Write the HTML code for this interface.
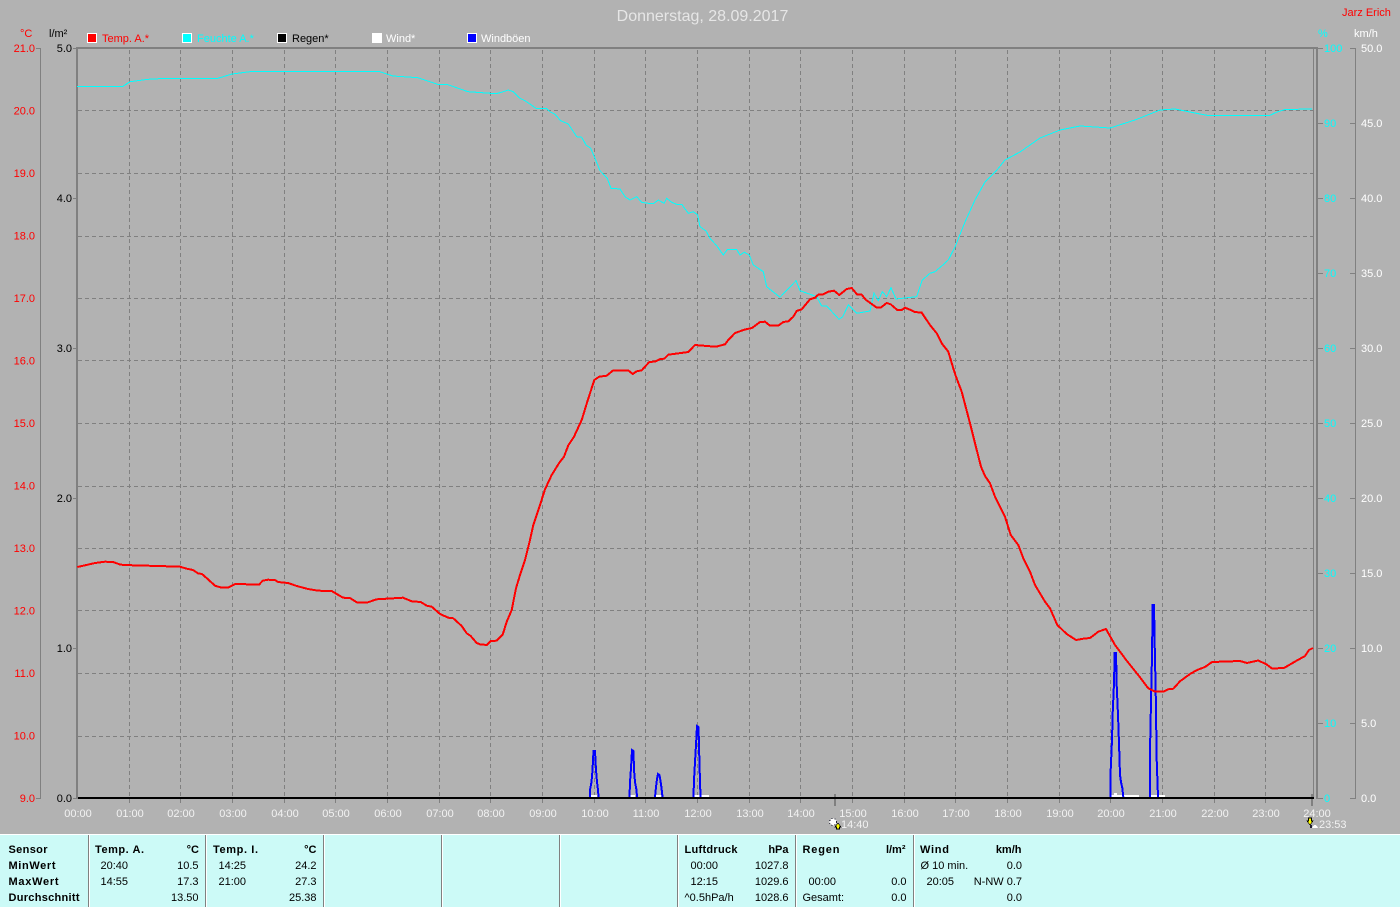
<!DOCTYPE html>
<html><head><meta charset="utf-8"><title>Donnerstag, 28.09.2017</title>
<style>html,body{margin:0;padding:0;background:#b2b2b2;width:1400px;height:907px;overflow:hidden}svg{display:block}text{font-family:"Liberation Sans",sans-serif;font-size:11px}</style></head><body>
<svg width="1400" height="907" viewBox="0 0 1400 907" xmlns="http://www.w3.org/2000/svg">
<rect width="1400" height="907" fill="#b2b2b2"/>
<g shape-rendering="crispEdges" fill="none" stroke="#808080">
<path stroke-dasharray="4 3" d="M78 110.5H1316M78 173.5H1316M78 236.5H1316M78 298.5H1316M78 360.5H1316M78 423.5H1316M78 486.5H1316M78 548.5H1316M78 610.5H1316M78 673.5H1316M78 736.5H1316"/>
<path stroke-dasharray="4 3" d="M129.5 50V803M180.5 50V803M232.5 50V803M284.5 50V803M335.5 50V803M387.5 50V803M439.5 50V803M490.5 50V803M542.5 50V803M594.5 50V803M645.5 50V803M697.5 50V803M749.5 50V803M800.5 50V803M852.5 50V803M904.5 50V803M955.5 50V803M1007.5 50V803M1059.5 50V803M1110.5 50V803M1162.5 50V803M1214.5 50V803M1265.5 50V803"/>
<path d="M40.5 48V798M1355.5 48V798M36 48.5H41M36 798.5H41M1350 48.5H1356M1350 123.5H1356M1350 198.5H1356M1350 273.5H1356M1350 348.5H1356M1350 423.5H1356M1350 498.5H1356M1350 573.5H1356M1350 648.5H1356M1350 723.5H1356M1350 798.5H1356M73 48.5H78M73 198.5H78M73 348.5H78M73 498.5H78M73 648.5H78M73 798.5H78M1318 48.5H1323M1318 123.5H1323M1318 198.5H1323M1318 273.5H1323M1318 348.5H1323M1318 423.5H1323M1318 498.5H1323M1318 573.5H1323M1318 648.5H1323M1318 723.5H1323M1318 798.5H1323M1313.5 48V798"/>
<rect x="76" y="48" width="2" height="751" fill="#808080" stroke="none"/>
<rect x="1316" y="48" width="2" height="751" fill="#808080" stroke="none"/>
<rect x="76" y="47" width="1242" height="2" fill="#808080" stroke="none"/>
<rect x="834" y="794" width="2" height="12" fill="#808080" stroke="none"/>
<rect x="1311" y="794" width="2" height="12" fill="#808080" stroke="none"/>
</g>
<g shape-rendering="crispEdges" fill="none">
<path stroke="#0ff" stroke-width="1" d="M77 86.3L123 86.3 130 81.7 148 79.3 166 78.3 218 78.3 232 74 250 71.7 378.6 71.3 393 76 418 77.7 437.5 84.3 448 84.7 468 91.7 496 93.7 500 92.7 508.3 90 513.3 91.7 520 98.3 525 100.7 536.7 108.7 546.7 108.7 550 111.7 555 114.3 560.7 120.7 568.3 124 576.7 136.7 581.7 137.3 586 145 590.7 148.3 595 158.3 600 170.7 607.3 178.3 611 188.3 620 189 625 196.7 630 200 636.7 196.7 641.7 202.3 648.3 203.3 654 203.3 658.3 200 664 203.3 666.7 198.3 671.7 202.3 676.7 204.3 681.7 204.3 688.3 213.3 693.3 211.7 697.7 215 700 226.7 706 231 710 238.3 716.7 245.7 723.3 255 727.3 249.7 736.7 249.7 740 255 744.3 252.3 749.3 255 753.3 265 763.3 271.7 766.7 286.7 780 297.3 796 280.7 800 290.7 816.7 296.7 821.7 306 826.7 306 839 319.3 842.7 316.7 848.3 305 856.7 313.3 870 311 874 293.3 878.3 300.7 882.3 291.7 886.7 296.7 891 287.7 896 299 916.7 296.7 922.3 280 930 273.3 935 271.7 941.7 266 948.3 260 955 247 965 222 975 200 985 182 997 170 1005 160 1020 152 1040 138 1060 130 1080 126 1110 128 1135 120 1160 110 1175 109 1200 114 1207 115.3 1270 115.3 1277 112 1285 109.5 1312 109"/>
<path stroke="#fff" stroke-width="2" d="M591 796H597M630 796H635M656 796H661M694 796H709M1111 796H1139M1151 796H1165M1114 794H1117"/>
<path stroke="#00f" stroke-width="2" d="M590 797L590 790 591.5 782 592.5 770 593.5 751 595 751 596 770 597 782 598 790 598.5 797"/>
<path stroke="#00f" stroke-width="2" d="M629.5 797L630 782 631 768 632 750 633.5 751 634 770 635 782 636.5 790 637 797"/>
<path stroke="#00f" stroke-width="2" d="M655 797L656 787 657 779 658 774 659.5 775 660.5 781 661.5 788 662.5 797"/>
<path stroke="#00f" stroke-width="2" d="M693.5 797L694 780 695 762 696 745 697 726 698.5 727 699 745 699.5 765 700.5 797"/>
<path stroke="#00f" stroke-width="2" d="M1110.7 797L1110.7 770 1112 740 1112.7 713 1114 683 1114.7 653 1116 653 1116.7 685 1118 715 1119 743 1120 775 1121 782 1122.3 788 1123.3 797"/>
<path stroke="#00f" stroke-width="2" d="M1150 797L1150 750 1151 702 1152 655 1152.7 605 1154 605 1154.7 645 1155.7 692 1156.7 760 1158 797"/>
<path stroke="#f00" stroke-width="2" d="M77.3 567L85 565.3 95 563 105 561.7 113 562 120.7 564.7 133 565.3 158 566 180 566.7 186.7 568.7 193 570 198 573.3 202 574 208 579.3 215 585.7 221.7 587.7 228 587.7 235 584 245 584 248 584.7 259 584.7 262.7 580.7 268 579.7 275 580 278 582 288 583 296.7 586 308 589 318 590.7 331.7 591 343 597.7 350 598 356.7 602.3 366.7 602.7 376.7 599.3 386.7 598.7 403 597.7 411.7 601.3 420.7 602 426.7 605.7 431.7 606.7 440 614 448.3 617.7 453.3 618.3 461.7 626 466.7 633.3 470.7 636 476.7 643 480 644.3 486.7 645 490.7 641 496.7 640.7 502.7 634.7 506.7 621.7 511.7 610 516 588.3 520 575 525 560 530 540 533.3 525 540 505 545 489.3 551.7 475 559.3 462.7 564 456.7 568.3 445.3 574 436.7 581.7 420 587.3 401.7 594.3 380 599.3 376.7 606.7 375.7 612.7 370.7 628.7 370.7 632.7 374 636.7 371.3 641.7 370.3 649 362.3 655.7 361.3 660 359 664.3 358.7 668.3 354.7 688.3 352 695 345 706.7 346 716 346.7 725 344.3 728.3 340 735 333 745 329.5 752 328 760 322 765 321.7 770 325.7 778.3 325.7 783.3 322 788.3 321.3 793.3 316.7 796.7 311 801.7 309.3 810 299.3 815 297.7 818.3 294.7 823.3 294.3 828.3 291.7 834 290.7 839.3 295 846.7 289 851.7 288 857.3 294.7 861.7 294.7 866 300 870 302.7 876.7 307.7 880.7 307.7 886.7 303 890.7 304.3 897.3 310 901.7 310 905 307.7 910.7 310 915 312 921.7 312.7 930 325 936.7 333.3 941.7 343.3 948.3 351.7 953.3 368.3 956 376.7 961.7 391.7 970 423.3 975 443.3 981 466.7 985 476 990 483.3 995 496.7 1005 516.7 1010.7 535 1018.3 545 1023.3 558.3 1030 571.7 1035 585 1045 601.7 1050 608.3 1057.3 625 1066.7 634 1076 640 1083.3 638.7 1090 638 1098.3 631.7 1106 629 1115 645 1126.7 660.7 1140 677.3 1148.3 688.3 1155 691.7 1163.3 691.7 1168.3 689.3 1173.3 688.7 1180 681.3 1190 674 1197 670 1205 667 1212 662 1240 661 1247 663 1258 660.5 1266 664 1272 668.5 1284 668 1296 661 1305 656 1309 650 1313 648"/>
<rect x="78" y="797" width="1236" height="2" fill="#000"/>
</g>
<!-- legend -->
<g shape-rendering="crispEdges" stroke="#fff">
<rect x="87.5" y="33.5" width="9" height="9" fill="#f00"/><rect x="182.5" y="33.5" width="9" height="9" fill="#0ff"/><rect x="277.5" y="33.5" width="9" height="9" fill="#000"/><rect x="372.5" y="33.5" width="9" height="9" fill="#fff"/><rect x="467.5" y="33.5" width="9" height="9" fill="#00f"/>
</g>
<text x="102" y="42" fill="#f00">Temp. A.*</text><text x="197" y="42" fill="#0ff">Feuchte A.*</text><text x="292" y="42" fill="#000">Regen*</text><text x="386" y="42" fill="#fff">Wind*</text><text x="481" y="42" fill="#fff">Windböen</text>
<text x="702.5" y="21" text-anchor="middle" fill="#e6e6e6" style="font-size:16px">Donnerstag, 28.09.2017</text>
<text x="1342" y="16" fill="#f00">Jarz Erich</text>
<text x="20" y="37" fill="#f00">°C</text><text x="49" y="37" fill="#000">l/m²</text><text x="1318" y="37" fill="#0ff">%</text><text x="1354" y="37" fill="#fff">km/h</text>
<g fill="#f00" text-anchor="end"><text x="35" y="52">21.0</text><text x="35" y="114.5">20.0</text><text x="35" y="177">19.0</text><text x="35" y="239.5">18.0</text><text x="35" y="302">17.0</text><text x="35" y="364.5">16.0</text><text x="35" y="427">15.0</text><text x="35" y="489.5">14.0</text><text x="35" y="552">13.0</text><text x="35" y="614.5">12.0</text><text x="35" y="677">11.0</text><text x="35" y="739.5">10.0</text><text x="35" y="802">9.0</text></g>
<g fill="#000" text-anchor="end"><text x="72" y="52">5.0</text><text x="72" y="202">4.0</text><text x="72" y="352">3.0</text><text x="72" y="502">2.0</text><text x="72" y="652">1.0</text><text x="72" y="802">0.0</text></g>
<g fill="#0ff"><text x="1324" y="52">100</text><text x="1324" y="127">90</text><text x="1324" y="202">80</text><text x="1324" y="277">70</text><text x="1324" y="352">60</text><text x="1324" y="427">50</text><text x="1324" y="502">40</text><text x="1324" y="577">30</text><text x="1324" y="652">20</text><text x="1324" y="727">10</text><text x="1324" y="802">0</text></g>
<g fill="#fff"><text x="1361" y="52">50.0</text><text x="1361" y="127">45.0</text><text x="1361" y="202">40.0</text><text x="1361" y="277">35.0</text><text x="1361" y="352">30.0</text><text x="1361" y="427">25.0</text><text x="1361" y="502">20.0</text><text x="1361" y="577">15.0</text><text x="1361" y="652">10.0</text><text x="1361" y="727">5.0</text><text x="1361" y="802">0.0</text></g>
<g fill="#f2f2f2" text-anchor="middle"><text x="78" y="817">00:00</text><text x="130" y="817">01:00</text><text x="181" y="817">02:00</text><text x="233" y="817">03:00</text><text x="285" y="817">04:00</text><text x="336" y="817">05:00</text><text x="388" y="817">06:00</text><text x="440" y="817">07:00</text><text x="491" y="817">08:00</text><text x="543" y="817">09:00</text><text x="595" y="817">10:00</text><text x="646" y="817">11:00</text><text x="698" y="817">12:00</text><text x="750" y="817">13:00</text><text x="801" y="817">14:00</text><text x="853" y="817">15:00</text><text x="905" y="817">16:00</text><text x="956" y="817">17:00</text><text x="1008" y="817">18:00</text><text x="1060" y="817">19:00</text><text x="1111" y="817">20:00</text><text x="1163" y="817">21:00</text><text x="1215" y="817">22:00</text><text x="1266" y="817">23:00</text><text x="1317" y="817">24:00</text></g>
<text x="841" y="828" fill="#f2f2f2">14:40</text><text x="1319" y="828" fill="#f2f2f2">23:53</text>
<!-- sun icons -->
<g shape-rendering="crispEdges">
<circle cx="833" cy="822" r="3.5" fill="#fff" stroke="#223" stroke-width="1" stroke-dasharray="1 2"/>
<path d="M838 823L841 827H839.5V829H836.5V827H835Z" fill="#ff0" stroke="#000" stroke-width=".6"/>
<path d="M1310 825L1307 821H1308.5V818H1311.5V821H1313Z" fill="#ff0" stroke="#000" stroke-width=".6"/>
<path d="M1312 828Q1315 822 1318 828Z" fill="#fff"/><rect x="1310" y="825" width="2" height="3" fill="#223"/>
</g>
<!-- panel -->
<g shape-rendering="crispEdges">
<rect x="0" y="834" width="1400" height="1" fill="#fff"/>
<rect x="0" y="835" width="1400" height="72" fill="#ccfaf7"/>
<path fill="none" stroke="#808080" d="M88.5 835V907M205.5 835V907M323.5 835V907M441.5 835V907M559.5 835V907M677.5 835V907M795.5 835V907M913.5 835V907"/>
<path fill="none" stroke="#fff" d="M89.5 835V907M206.5 835V907M324.5 835V907M442.5 835V907M560.5 835V907M678.5 835V907M796.5 835V907M914.5 835V907"/>
</g>
<g fill="#000" font-weight="bold" style="font-weight:bold">
<text x="8.5" y="853" textLength="39">Sensor</text><text x="8.5" y="869" textLength="47">MinWert</text><text x="8.5" y="885" textLength="50">MaxWert</text><text x="8.5" y="901" textLength="71">Durchschnitt</text>
<text x="95" y="853" textLength="49">Temp. A.</text><text x="199" y="853" text-anchor="end">°C</text>
<text x="213" y="853" textLength="45">Temp. I.</text><text x="316.5" y="853" text-anchor="end">°C</text>
<text x="684.5" y="853" textLength="53">Luftdruck</text><text x="788.5" y="853" text-anchor="end">hPa</text>
<text x="802.5" y="853" textLength="37">Regen</text><text x="905.5" y="853" text-anchor="end">l/m²</text>
<text x="920" y="853" textLength="29">Wind</text><text x="1021.5" y="853" text-anchor="end">km/h</text>
</g>
<g fill="#000">
<text x="100.5" y="869">20:40</text><text x="100.5" y="885">14:55</text>
<text x="218.5" y="869">14:25</text><text x="218.5" y="885">21:00</text>
<text x="690.5" y="869">00:00</text><text x="690.5" y="885">12:15</text><text x="684.5" y="901">^0.5hPa/h</text>
<text x="808.5" y="885">00:00</text><text x="802.5" y="901">Gesamt:</text>
<text x="920.5" y="869">Ø 10 min.</text><text x="926.5" y="885">20:05</text>
</g>
<g fill="#000" text-anchor="end">
<text x="198.5" y="869">10.5</text><text x="198.5" y="885">17.3</text><text x="198.5" y="901">13.50</text>
<text x="316.5" y="869">24.2</text><text x="316.5" y="885">27.3</text><text x="316.5" y="901">25.38</text>
<text x="788.5" y="869">1027.8</text><text x="788.5" y="885">1029.6</text><text x="788.5" y="901">1028.6</text>
<text x="906.5" y="885">0.0</text><text x="906.5" y="901">0.0</text>
<text x="1022" y="869">0.0</text><text x="1022" y="885">N-NW 0.7</text><text x="1022" y="901">0.0</text>
</g>
</svg>
</body></html>
